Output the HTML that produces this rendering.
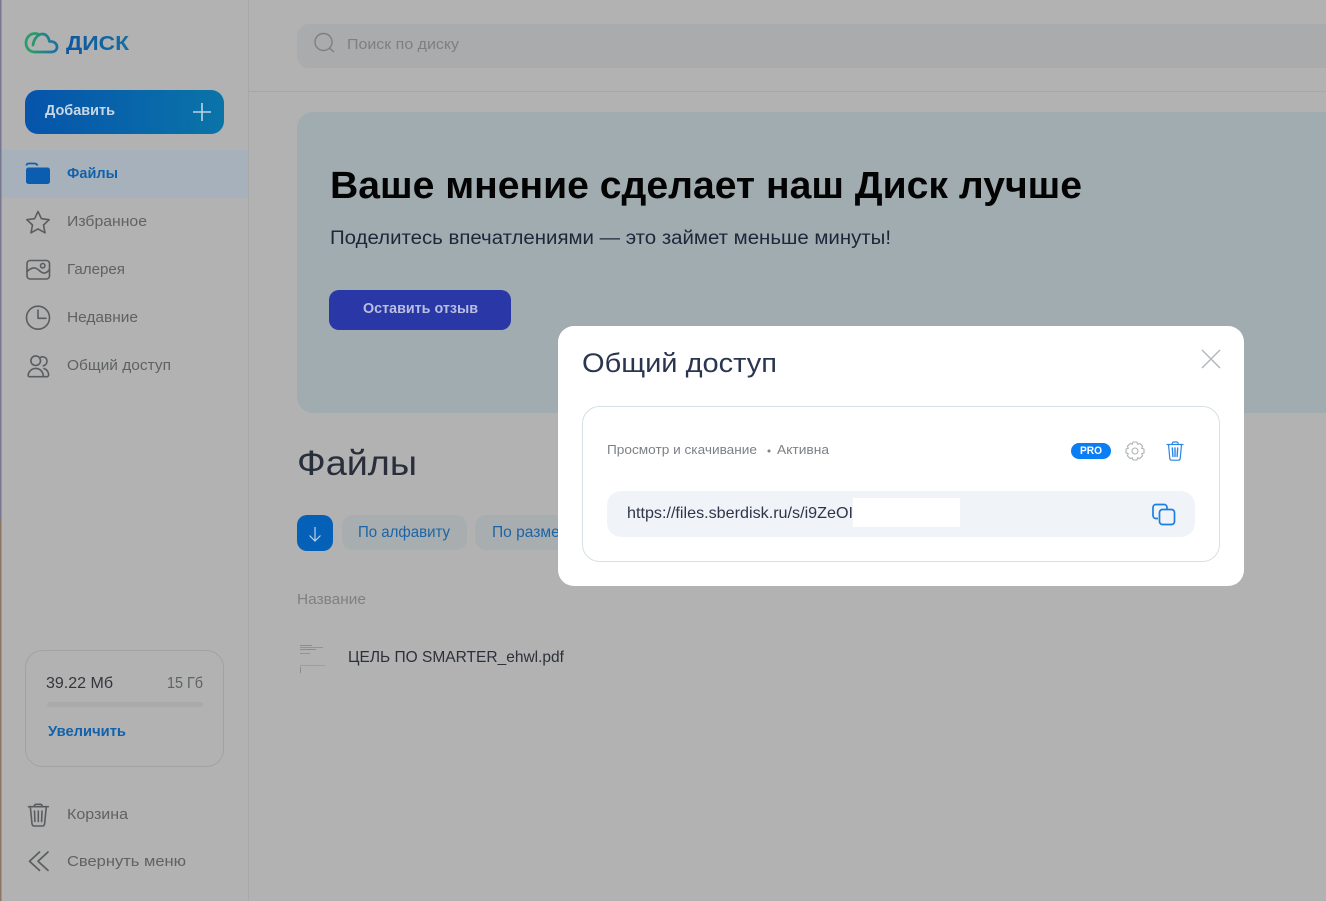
<!DOCTYPE html>
<html lang="ru"><head><meta charset="utf-8"><title>Диск</title>
<style>
html,body{margin:0;padding:0;width:1326px;height:901px;overflow:hidden;background:#b2b2b2}
svg{display:block}
text{font-family:"Liberation Sans","DejaVu Sans",sans-serif;white-space:pre}
</style></head><body>
<svg width="1326" height="901" viewBox="0 0 1326 901" xmlns="http://www.w3.org/2000/svg">
<defs>
<linearGradient id="add" x1="0" y1="0" x2="1" y2="0"><stop offset="0" stop-color="#0654ab"/><stop offset="1" stop-color="#0a74a8"/></linearGradient>
<linearGradient id="logo" gradientUnits="userSpaceOnUse" x1="30" y1="42" x2="57" y2="42"><stop offset="0" stop-color="#2a9c68"/><stop offset="1" stop-color="#1b6fa6"/></linearGradient>
<linearGradient id="word" gradientUnits="userSpaceOnUse" x1="66" y1="0" x2="129" y2="0"><stop offset="0" stop-color="#0c56a2"/><stop offset="1" stop-color="#14709f"/></linearGradient>
</defs>
<rect width="1326" height="901" fill="#b2b2b2"/>
<rect x="0" y="0" width="1.500" height="520" fill="#77778f"/>
<rect x="0" y="520" width="1.500" height="381" fill="#8f7468"/>
<rect x="248" y="0" width="1" height="901" fill="#a7a9a9"/>
<rect x="249" y="91" width="1077" height="1" fill="#a6a8a8"/>

<path d="M35 52C29 52 26 47.500 26 43C26 37.500 30 33.500 35 33.500C36 33.500 37 33.700 38 34" fill="none" stroke="#2a9c68" stroke-width="2.700" stroke-linecap="round"/>
<path d="M33 45C34 39 37.500 34 42.500 34C46 34 48.500 37 49.500 41.500C53.500 41 57 43.500 57 47C57 50 54.500 52 51.500 52H35" fill="none" stroke="url(#logo)" stroke-width="2.700" stroke-linecap="round" stroke-linejoin="round"/>
<text x="66" y="50" font-size="20.500" font-weight="700" fill="url(#word)" textLength="63" lengthAdjust="spacingAndGlyphs">ДИСК</text>

<rect x="25" y="90" width="199" height="44" rx="13" fill="url(#add)"/>
<text x="45" y="115" font-size="15" font-weight="700" fill="#c9d7e4" textLength="70" lengthAdjust="spacingAndGlyphs">Добавить</text>
<path d="M202 103v18M193 112h18" stroke="#bcd3e2" stroke-width="1.600" fill="none"/>

<rect x="1.500" y="150" width="246.500" height="48" fill="#a6b1bb"/>
<path d="M26.500 165.500c0-1.300 1-2 2-2h6c1.500 0 2.500.8 3.200 2" fill="none" stroke="#0f5fad" stroke-width="1.800"/>
<rect x="26" y="167.500" width="24" height="16.500" rx="2.500" fill="#0b5db0"/>
<text x="67" y="178" font-size="14.500" font-weight="700" fill="#1262ab" textLength="51" lengthAdjust="spacingAndGlyphs">Файлы</text>

<g fill="none" stroke="#5a5d5f" stroke-width="1.600" stroke-linejoin="round" stroke-linecap="round">
<path d="M38 211.500l3.400 7.200 7.800 1-5.700 5.300 1.500 7.800-7-3.900-7 3.900 1.500-7.800-5.700-5.300 7.800-1z"/>
<rect x="27" y="260.500" width="22.500" height="18.500" rx="3"/>
<path d="M27 271.500c2.500-2.500 5-4 8-3.500 3.500.5 5 4.500 8.500 5 2.500.3 4.500-1.500 6-3.500"/><circle cx="42.700" cy="265.700" r="2.200"/>
<circle cx="38" cy="317.700" r="11.500"/><path d="M38 310v8.300h8"/>
<circle cx="35.700" cy="360.700" r="4.800"/>
<path d="M29.500 376.700c-1 0-1.500-.8-1.300-1.800.6-3.800 3.700-6.500 7.500-6.500s6.900 2.700 7.500 6.500c.2 1-.3 1.800-1.300 1.800z"/>
<path d="M40.700 357.200c3-1.300 6.300.7 6.300 3.900 0 2.300-1.500 4.200-3.700 4.700M44 368.500c2.700 1 4.300 3.300 4.600 6 .1 1.200-.5 2.200-1.600 2.200h-4"/>
<path d="M28.500 806.700h19.800M34 806.700l.5-1.400c.3-.7.800-1 1.500-1h4.500c.7 0 1.200.3 1.500 1l.5 1.400M30.300 806.700l1.700 17c.1 1.400 1 2.300 2.300 2.300h8c1.300 0 2.200-.9 2.300-2.300l1.700-17M34.500 811l.4 10.500M38.300 811v10.500M42 811l-.4 10.500"/>
<path d="M39.500 852l-10 9.200 10 9.200M48 852l-10 9.200 10 9.200" stroke-width="1.700"/>
</g>
<text x="67" y="226" font-size="15" fill="#5f6264" textLength="80" lengthAdjust="spacingAndGlyphs">Избранное</text>
<text x="67" y="274" font-size="15" fill="#5f6264" textLength="58" lengthAdjust="spacingAndGlyphs">Галерея</text>
<text x="67" y="322" font-size="15" fill="#5f6264" textLength="71" lengthAdjust="spacingAndGlyphs">Недавние</text>
<text x="67" y="370" font-size="15" fill="#5f6264" textLength="104" lengthAdjust="spacingAndGlyphs">Общий доступ</text>

<rect x="25.500" y="650.500" width="198" height="116" rx="17" fill="none" stroke="#9fa3a3"/>
<text x="46" y="688" font-size="15.500" fill="#33353a" textLength="67" lengthAdjust="spacingAndGlyphs">39.22 Мб</text>
<text x="167" y="688" font-size="15.500" fill="#5f6264" textLength="36" lengthAdjust="spacingAndGlyphs">15 Гб</text>
<rect x="47" y="702" width="156" height="5" rx="2.500" fill="#a9abab"/>
<text x="48" y="736" font-size="15" font-weight="700" fill="#1262ab" textLength="78" lengthAdjust="spacingAndGlyphs">Увеличить</text>
<text x="67" y="819" font-size="15" fill="#5f6264" textLength="61" lengthAdjust="spacingAndGlyphs">Корзина</text>
<text x="67" y="866" font-size="15" fill="#5f6264" textLength="119" lengthAdjust="spacingAndGlyphs">Свернуть меню</text>

<rect x="297" y="24" width="1040" height="44" rx="12" fill="#a9abac"/>
<circle cx="323.500" cy="42" r="8.500" fill="none" stroke="#7d8082" stroke-width="1.400"/>
<path d="M330 48.500l4 3.500" stroke="#7d8082" stroke-width="1.400" fill="none"/>
<text x="347" y="49" font-size="15" fill="#7d8082" textLength="112" lengthAdjust="spacingAndGlyphs">Поиск по диску</text>

<rect x="297" y="112" width="1050" height="301" rx="16" fill="#a1acb1"/>
<text x="330" y="198" font-size="38" font-weight="700" fill="#030303" textLength="752" lengthAdjust="spacingAndGlyphs">Ваше мнение сделает наш Диск лучше</text>
<text x="330" y="244" font-size="19" fill="#20263a" textLength="561" lengthAdjust="spacingAndGlyphs">Поделитесь впечатлениями — это займет меньше минуты!</text>
<rect x="329" y="290" width="182" height="40" rx="10" fill="#2a37a6"/>
<text x="363" y="313" font-size="14.500" font-weight="700" fill="#b9bfe0" textLength="115" lengthAdjust="spacingAndGlyphs">Оставить отзыв</text>

<text x="297" y="475" font-size="35" fill="#292e3b" textLength="120" lengthAdjust="spacingAndGlyphs">Файлы</text>
<rect x="297" y="515" width="36" height="36" rx="10" fill="#0560b8"/>
<path d="M315 527v14M309.500 535.500l5.500 5.500 5.500-5.500" fill="none" stroke="#bcd2e8" stroke-width="1.200"/>
<rect x="342" y="515" width="125" height="35" rx="11" fill="#a8adaf"/>
<text x="358" y="537" font-size="16" fill="#1c64a6" textLength="92" lengthAdjust="spacingAndGlyphs">По алфавиту</text>
<rect x="475" y="515" width="120" height="35" rx="11" fill="#a8adaf"/>
<text x="492" y="537" font-size="16" fill="#1c64a6" textLength="84" lengthAdjust="spacingAndGlyphs">По размеру</text>
<text x="297" y="604" font-size="15" fill="#7e8082" textLength="69" lengthAdjust="spacingAndGlyphs">Название</text>
<g fill="#8a8c8e"><rect x="300" y="645" width="12" height="1"/><rect x="300" y="647" width="23" height=".8"/><rect x="300" y="649" width="16" height="1"/><rect x="300" y="653" width="10" height=".8"/><rect x="300" y="665" width="25" height=".8" fill="#989a9b"/><rect x="300" y="667" width="1" height="6"/></g>
<text x="348" y="662" font-size="16" fill="#2d303a" textLength="216" lengthAdjust="spacingAndGlyphs">ЦЕЛЬ ПО SMARTER_ehwl.pdf</text>

<rect x="558" y="326" width="686" height="260" rx="16" fill="#fff"/>
<text x="582" y="372" font-size="27" fill="#2a3550" textLength="195" lengthAdjust="spacingAndGlyphs">Общий доступ</text>
<path d="M1202 350l18 18M1220 350l-18 18" stroke="#b5b8ba" stroke-width="1.500" fill="none"/>
<rect x="582.500" y="406.500" width="637" height="155" rx="17" fill="#fff" stroke="#d6e0e4"/>
<text x="607" y="454" font-size="13" fill="#7c8186" textLength="150" lengthAdjust="spacingAndGlyphs">Просмотр и скачивание</text>
<circle cx="769" cy="451" r="1.500" fill="#7c8186"/>
<text x="777" y="454" font-size="13" fill="#7c8186" textLength="52" lengthAdjust="spacingAndGlyphs">Активна</text>
<rect x="1071" y="443" width="40" height="16" rx="8" fill="#0a7ff5"/>
<text x="1080" y="454" font-size="11" font-weight="700" fill="#fff" textLength="22" lengthAdjust="spacingAndGlyphs">PRO</text>
<g fill="none" stroke="#aeb2b5" stroke-width="1.100" stroke-linejoin="round">
<path d="M1133 442h4l.7 2.300 2-.9 2.900 2.900-.9 2 2.300.7v4l-2.300.7.9 2-2.900 2.900-2-.9-.7 2.300h-4l-.7-2.300-2 .9-2.900-2.900.9-2-2.300-.7v-4l2.300-.7-.9-2 2.900-2.900 2 .9z"/>
<circle cx="1135" cy="451" r="3"/>
</g>
<g fill="none" stroke="#2a86e8" stroke-width="1.200" stroke-linecap="round" stroke-linejoin="round">
<path d="M1167 444.500h16M1172 444.500l.4-1.500c.2-.8.7-1 1.300-1h3c.6 0 1.100.2 1.300 1l.4 1.500M1168.500 444.500l1.300 14c.1.900.7 1.700 1.700 1.700h7c1 0 1.600-.8 1.700-1.700l1.300-14"/>
<path d="M1172.300 448l.6 8.500M1175 448v8.500M1177.700 448l-.6 8.500" stroke-width="1.400"/>
</g>
<rect x="607" y="491" width="588" height="46" rx="14" fill="#f0f4f8"/>
<text x="627" y="518" font-size="16" fill="#2e3549" textLength="226" lengthAdjust="spacingAndGlyphs">https://files.sberdisk.ru/s/i9ZeOI</text>
<rect x="853" y="498" width="107" height="29" fill="#fff"/>
<g fill="none" stroke="#1a7fe0" stroke-width="1.700">
<path d="M1158 518.500h-2c-1.700 0-3-1.300-3-3v-8c0-1.700 1.300-3 3-3h8c1.700 0 3 1.300 3 3v2"/>
<rect x="1159.500" y="509.500" width="15" height="15" rx="3"/>
</g>
</svg>
</body></html>
